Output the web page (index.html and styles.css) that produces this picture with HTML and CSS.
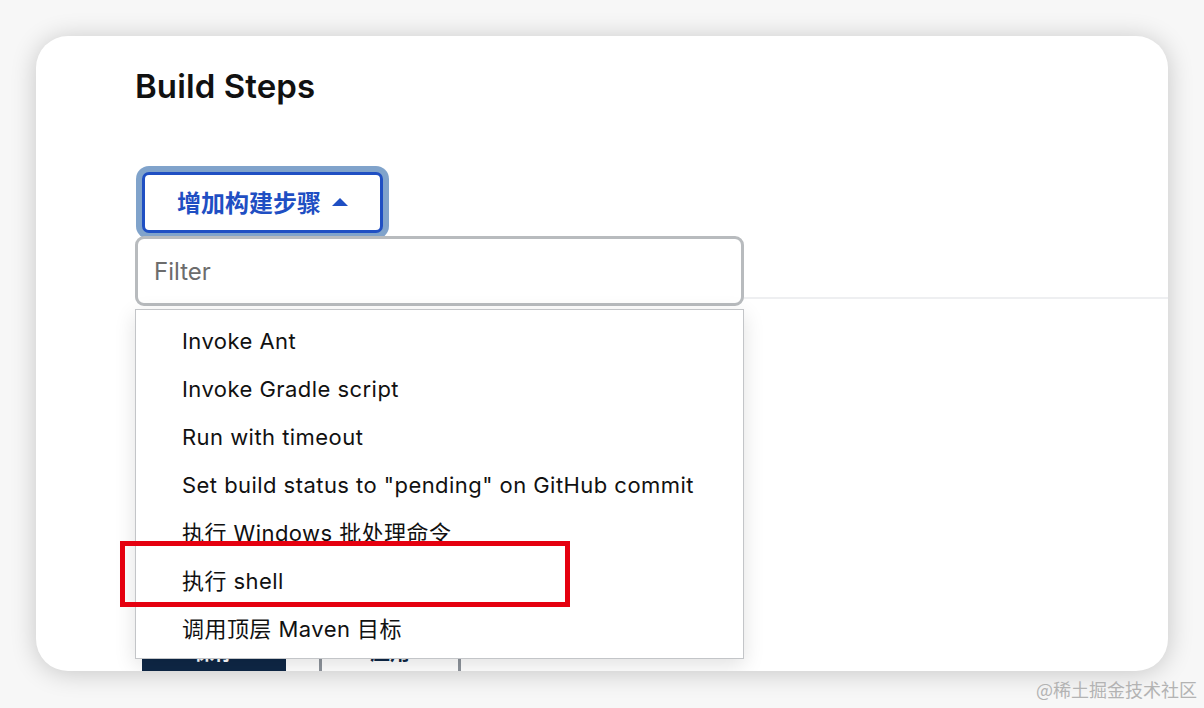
FILE: index.html
```html
<!DOCTYPE html>
<html>

<head>
    <title>Build Steps</title>
    <link rel="stylesheet" href="styles.css">
</head>

<body>
    <div class="page">
        <div class="card">
            <section class="section">
                <h2 class="section-title">Build Steps</h2>
                <div class="add-step">
                    <button class="add-btn">增加构建步骤<span class="caret"></span></button>
                    <div class="popover">
                        <input class="filter" type="text" placeholder="Filter">
                        <ul class="menu">
                            <li>Invoke Ant</li>
                            <li>Invoke Gradle script</li>
                            <li>Run with timeout</li>
                            <li>Set build status to "pending" on GitHub commit</li>
                            <li>执行 Windows 批处理命令</li>
                            <li class="marked">执行 shell<span class="highlight"></span></li>
                            <li>调用顶层 Maven 目标</li>
                        </ul>
                    </div>
                </div>
            </section>
            <div class="divider"></div>
            <div class="actions">
                <button class="btn-save">保存</button>
                <button class="btn-apply">应用</button>
            </div>
        </div>
        <div class="watermark">@稀土掘金技术社区</div>
    </div>
</body>

</html>
```
FILE: styles.css
```css
body {
    margin: 0;
    background: #f7f7f7;
    font-family: Inter, "Noto Sans CJK SC", sans-serif;
    color: #111;
}

.page {
    position: relative;
    height: 708px;
    padding: 36px 36px 0 36px;
    box-sizing: border-box;
}

.card {
    height: 635px;
    background: #fff;
    border-radius: 32px;
    overflow: hidden;
    box-shadow: 0 2px 26px rgba(0, 0, 0, 0.2);
}

.section {
    padding: 30px 0 0 99px;
}

.section-title {
    margin: 0;
    font-size: 33px;
    font-weight: 600;
    line-height: 40px;
    letter-spacing: 0.1px;
}

.add-step {
    position: relative;
    margin-top: 66px;
    height: 61px;
}

.add-btn {
    display: flex;
    align-items: center;
    justify-content: center;
    gap: 11px;
    margin-left: 7px;
    width: 241px;
    height: 61px;
    box-sizing: border-box;
    background: #fff;
    border: 3px solid #1f4fc3;
    border-radius: 7px;
    box-shadow: 0 0 0 6px #80a3cb;
    color: #1f4fc3;
    font-family: "Noto Sans CJK SC", sans-serif;
    font-size: 24px;
    font-weight: 700;
    padding: 0 0 2px 0;
}

.caret {
    width: 0;
    height: 0;
    border-left: 8px solid transparent;
    border-right: 8px solid transparent;
    border-bottom: 8px solid #1f4fc3;
}

.popover {
    position: absolute;
    top: 64px;
    left: 0;
    width: 609px;
    z-index: 2;
}

.filter {
    display: block;
    width: 609px;
    height: 70px;
    box-sizing: border-box;
    border: 3px solid #b8bbbe;
    border-radius: 9px;
    padding: 0 16px;
    font-family: Inter, sans-serif;
    font-size: 24px;
    color: #333;
    background: #fff;
    outline: none;
}

.filter::placeholder {
    color: #6c6c6c;
}

.menu {
    list-style: none;
    margin: 3px 0 0 0;
    padding: 7px 0 5px 0;
    background: #fff;
    border: 1px solid #c3c5c8;
    box-shadow: 0 6px 20px rgba(0, 0, 0, 0.12);
}

.menu li {
    position: relative;
    height: 48px;
    line-height: 48px;
    padding-left: 46px;
    font-size: 22px;
    letter-spacing: 0.45px;
    color: #111;
}

.highlight {
    position: absolute;
    top: -16px;
    left: -16px;
    width: 450px;
    height: 66px;
    box-sizing: border-box;
    border: 5px solid #e5000f;
}

.divider {
    height: 2px;
    margin: 64px 0 0 99px;
    background: #eeeff1;
}

.actions {
    display: flex;
    gap: 33px;
    margin-top: 322px;
    padding-left: 106px;
}

.actions button {
    height: 60px;
    font-family: "Noto Sans CJK SC", sans-serif;
    font-size: 20px;
    font-weight: 700;
    border-radius: 4px;
}

.btn-save {
    width: 144px;
    background: #0e2746;
    color: #fff;
    border: none;
}

.btn-apply {
    width: 142px;
    background: #fff;
    color: #0e2746;
    border: 3px solid #8d939b;
}

.watermark {
    position: absolute;
    right: 7px;
    bottom: 6px;
    font-family: "Noto Sans CJK SC", serif;
    font-size: 18px;
    color: #b3b3b3;
}
```
